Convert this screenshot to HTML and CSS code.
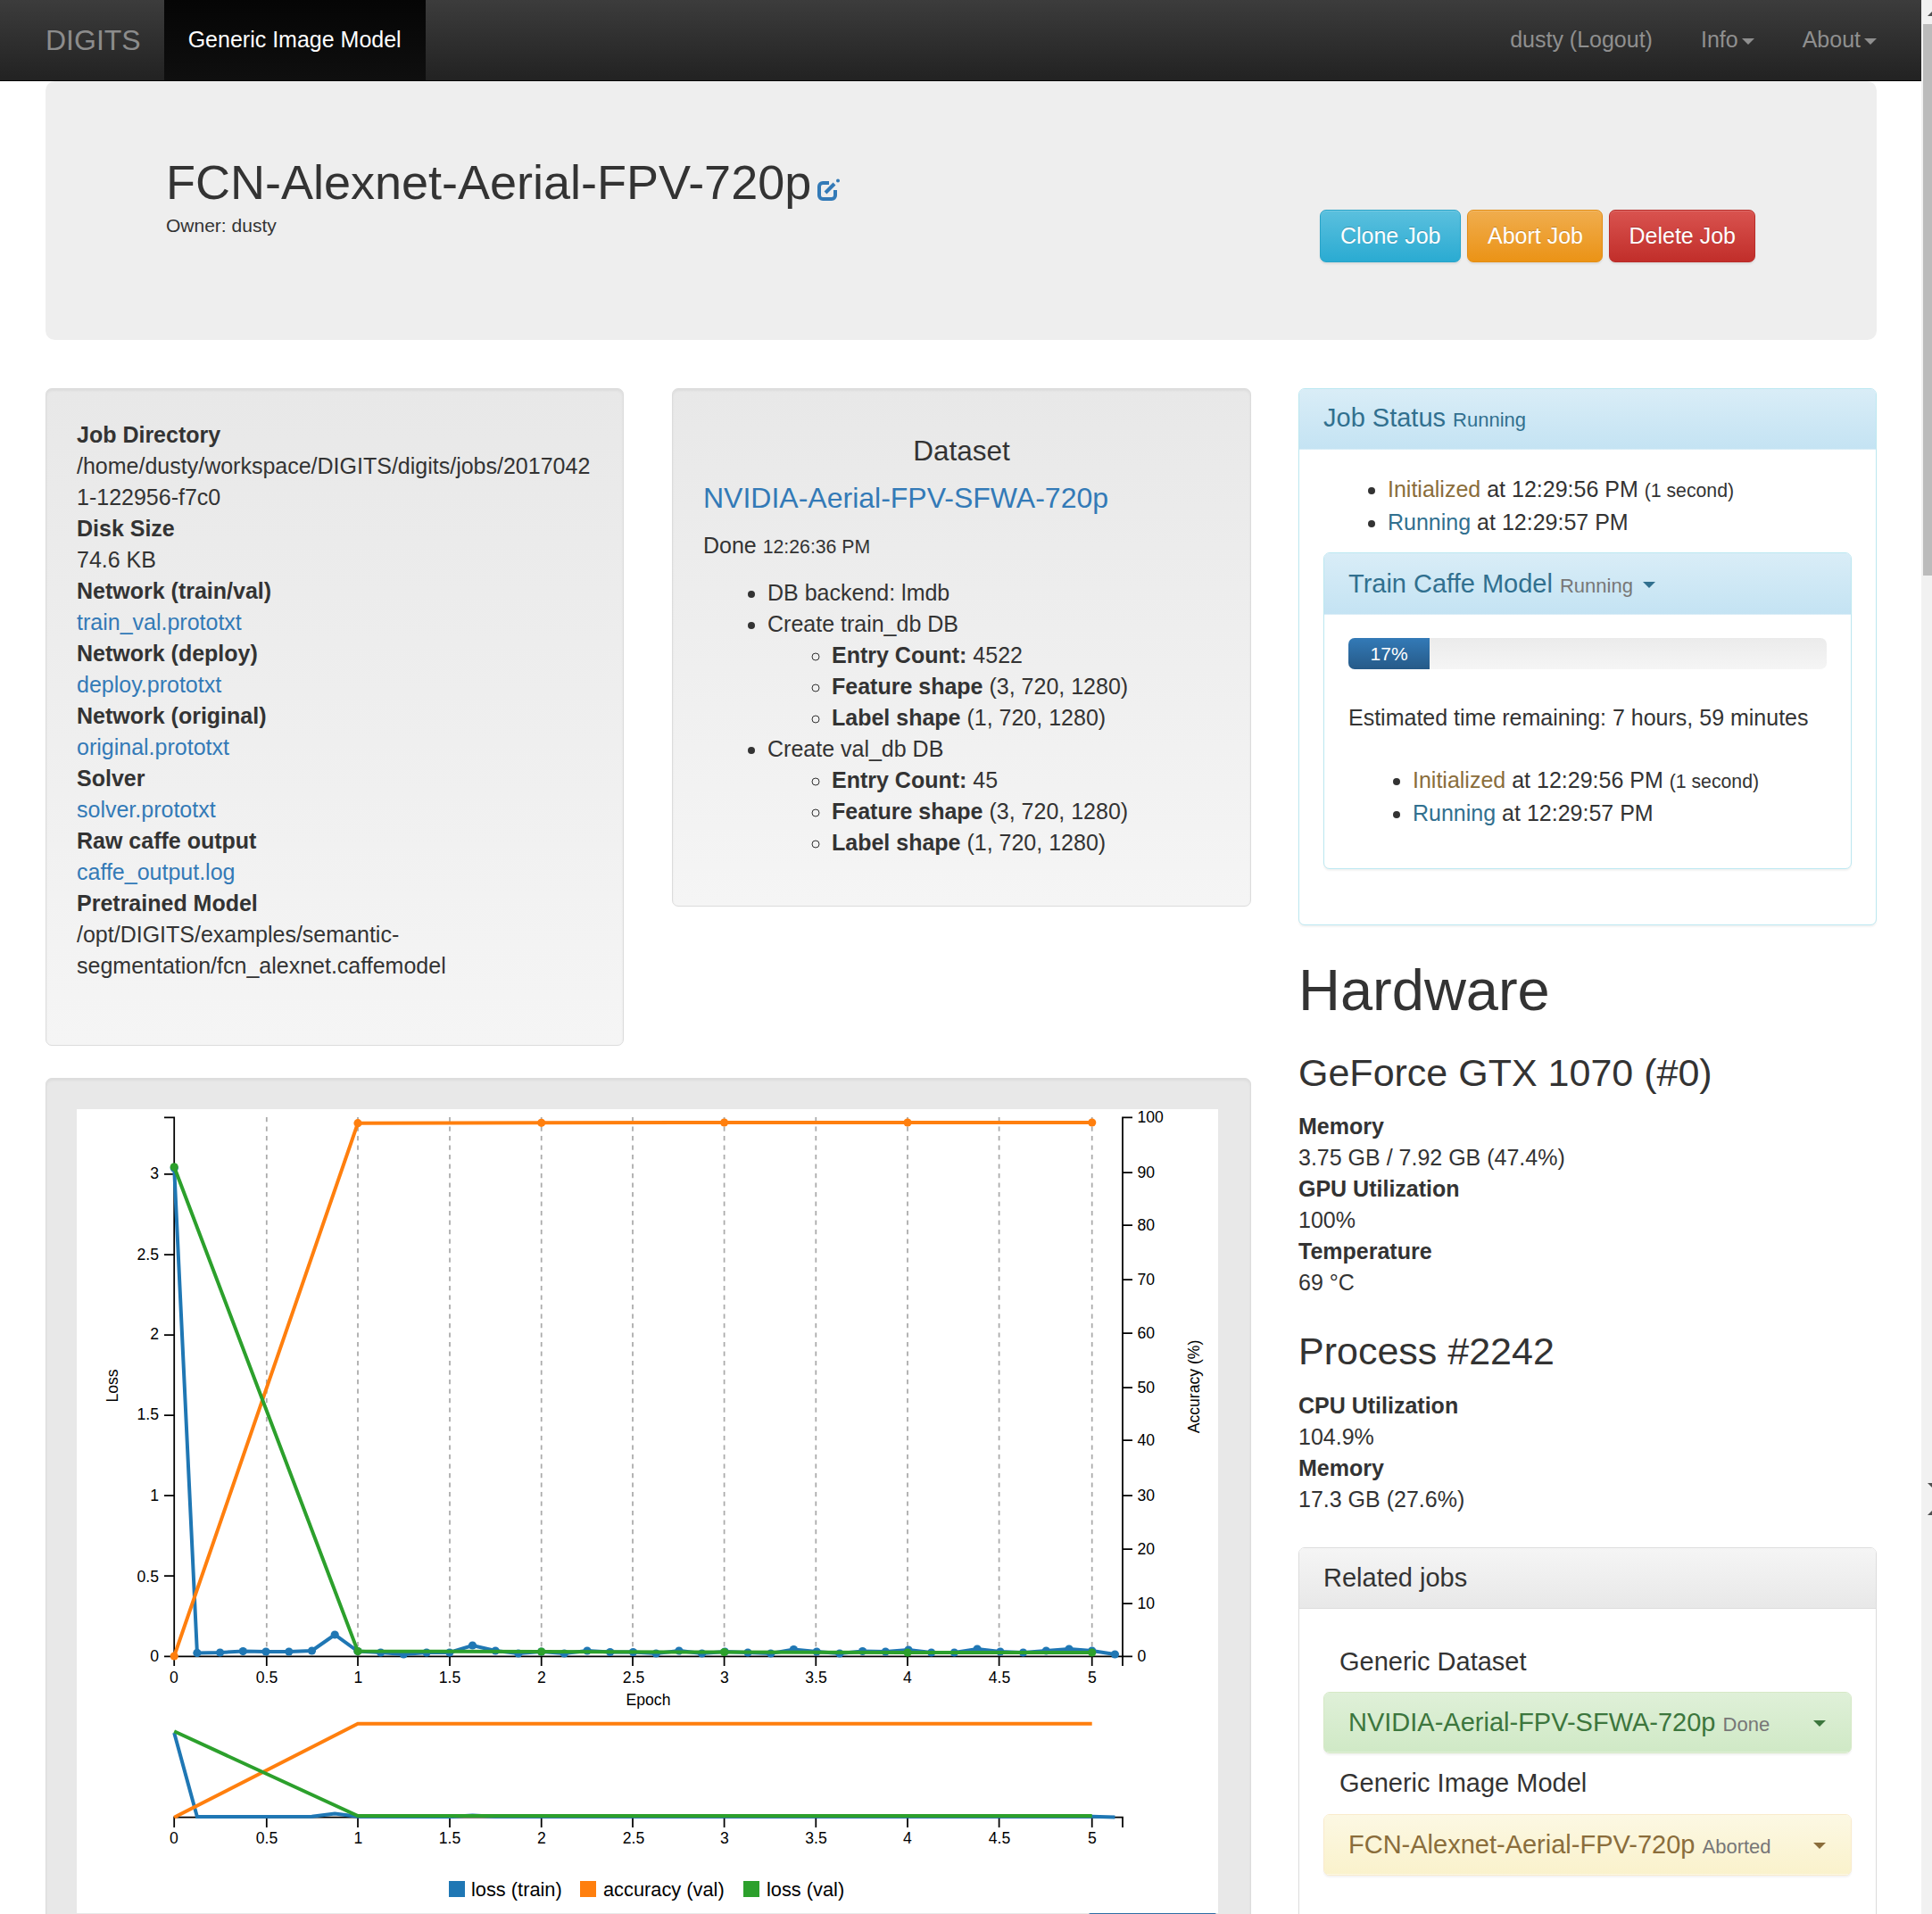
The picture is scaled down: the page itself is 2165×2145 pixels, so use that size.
FILE: index.html
```html
<!DOCTYPE html>
<html lang="en">

<head>
    <meta charset="UTF-8">
    <title>FCN-Alexnet-Aerial-FPV-720p - DIGITS</title>
    <link rel="stylesheet" href="styles.css">
</head>

<body>
    <div class="shell">
        <div class="page">
            <nav class="navbar">
                <a class="brand">DIGITS</a>
                <a class="nav-active">Generic Image Model</a>
                <div class="nav-right">
                    <a class="nav-link">dusty (Logout)</a>
                    <a class="nav-link">Info<span class="caret"></span></a>
                    <a class="nav-link">About<span class="caret"></span></a>
                </div>
            </nav>

            <div class="content">
                <div class="jumbotron">
                    <div class="job-title">
                        <h1>FCN-Alexnet-Aerial-FPV-720p<svg class="edit-icon" viewBox="0 0 25 24">
                                <path d="M13 4H6a4 4 0 0 0-4 4v10a4 4 0 0 0 4 4h10a4 4 0 0 0 4-4v-6" fill="none" stroke="#337ab7" stroke-width="4" />
                                <path d="M9 15 19 5" fill="none" stroke="#337ab7" stroke-width="4" />
                                <circle cx="23" cy="1.6" r="2" fill="#337ab7" />
                            </svg></h1>
                        <div class="owner">Owner: dusty</div>
                    </div>
                    <div class="job-actions">
                        <a class="btn btn-info">Clone Job</a>
                        <a class="btn btn-warning">Abort Job</a>
                        <a class="btn btn-danger">Delete Job</a>
                    </div>
                </div>

                <div class="columns">
                    <div class="col-main">
                        <div class="col-main-top">
                            <div class="well well-info">
                                <dl>
                                    <dt>Job Directory</dt>
                                    <dd>/home/dusty/workspace/DIGITS/digits/jobs/20170421-122956-f7c0</dd>
                                    <dt>Disk Size</dt>
                                    <dd>74.6 KB</dd>
                                    <dt>Network (train/val)</dt>
                                    <dd><a>train_val.prototxt</a></dd>
                                    <dt>Network (deploy)</dt>
                                    <dd><a>deploy.prototxt</a></dd>
                                    <dt>Network (original)</dt>
                                    <dd><a>original.prototxt</a></dd>
                                    <dt>Solver</dt>
                                    <dd><a>solver.prototxt</a></dd>
                                    <dt>Raw caffe output</dt>
                                    <dd><a>caffe_output.log</a></dd>
                                    <dt>Pretrained Model</dt>
                                    <dd>/opt/DIGITS/examples/semantic-segmentation/fcn_alexnet.caffemodel</dd>
                                </dl>
                            </div>
                            <div class="well well-dataset">
                                <h4 class="center">Dataset</h4>
                                <h4><a>NVIDIA-Aerial-FPV-SFWA-720p</a></h4>
                                <p class="done">Done <small>12:26:36 PM</small></p>
                                <ul class="dataset-list">
                                    <li>DB backend: lmdb</li>
                                    <li>Create train_db DB
                                        <ul>
                                            <li><b>Entry Count:</b> 4522</li>
                                            <li><b>Feature shape</b> (3, 720, 1280)</li>
                                            <li><b>Label shape</b> (1, 720, 1280)</li>
                                        </ul>
                                    </li>
                                    <li>Create val_db DB
                                        <ul>
                                            <li><b>Entry Count:</b> 45</li>
                                            <li><b>Feature shape</b> (3, 720, 1280)</li>
                                            <li><b>Label shape</b> (1, 720, 1280)</li>
                                        </ul>
                                    </li>
                                </ul>
                            </div>
                        </div>

                        <div class="well well-chart">
                            <svg class="chart" viewBox="86 1242 1279 901">
                                <!-- grid -->
                                <path class="grid" d="M298.8 1251V1855M401 1251V1855M504 1251V1855M606.7 1251V1855M709 1251V1855M811.6 1251V1855M914.3 1251V1855M1017 1251V1855M1119.6 1251V1855M1223.7 1251V1855" />

                                <!-- main axes -->
                                <path class="axis" d="M184 1251.4H195.2V1855.4H184M184 1314.8H195.2M184 1405H195.2M184 1495H195.2M184 1585H195.2M184 1675H195.2M184 1765H195.2" />
                                <path class="axis" d="M1269 1251.4H1258V1855.4H1269M1258 1313H1269M1258 1372H1269M1258 1433H1269M1258 1493H1269M1258 1554H1269M1258 1613H1269M1258 1675H1269M1258 1735H1269M1258 1796H1269" />
                                <path class="axis" d="M195.2 1866V1855.4H1258V1866M298.8 1855V1866M401 1855V1866M504 1855V1866M606.7 1855V1866M709 1855V1866M811.6 1855V1866M914.3 1855V1866M1017 1855V1866M1119.6 1855V1866M1223.7 1855V1866" />

                                <g class="tick-left">
                                    <text x="178" y="1320">3</text>
                                    <text x="178" y="1411">2.5</text>
                                    <text x="178" y="1500">2</text>
                                    <text x="178" y="1590">1.5</text>
                                    <text x="178" y="1681">1</text>
                                    <text x="178" y="1772">0.5</text>
                                    <text x="178" y="1861">0</text>
                                </g>
                                <g class="tick-right">
                                    <text x="1274.5" y="1257">100</text>
                                    <text x="1274.5" y="1319">90</text>
                                    <text x="1274.5" y="1378">80</text>
                                    <text x="1274.5" y="1439">70</text>
                                    <text x="1274.5" y="1499">60</text>
                                    <text x="1274.5" y="1560">50</text>
                                    <text x="1274.5" y="1619">40</text>
                                    <text x="1274.5" y="1681">30</text>
                                    <text x="1274.5" y="1741">20</text>
                                    <text x="1274.5" y="1802">10</text>
                                    <text x="1274.5" y="1861">0</text>
                                </g>
                                <g class="tick-x">
                                    <text x="195" y="1885">0</text>
                                    <text x="299" y="1885">0.5</text>
                                    <text x="401.5" y="1885">1</text>
                                    <text x="504" y="1885">1.5</text>
                                    <text x="607" y="1885">2</text>
                                    <text x="710" y="1885">2.5</text>
                                    <text x="812" y="1885">3</text>
                                    <text x="914.5" y="1885">3.5</text>
                                    <text x="1017" y="1885">4</text>
                                    <text x="1120" y="1885">4.5</text>
                                    <text x="1224" y="1885">5</text>
                                </g>
                                <text class="tick-x" x="726.5" y="1910">Epoch</text>
                                <text class="tick-x" transform="translate(132 1552) rotate(-90)">Loss</text>
                                <text class="tick-x" transform="translate(1344 1553) rotate(-90)">Accuracy (%)</text>

                                <defs>
                                    <marker id="dot-blue" markerUnits="userSpaceOnUse" markerWidth="12" markerHeight="12" refX="6" refY="6"><circle cx="6" cy="6" r="4.6" fill="#1f77b4" /></marker>
                                    <marker id="dot-orange" markerUnits="userSpaceOnUse" markerWidth="12" markerHeight="12" refX="6" refY="6"><circle cx="6" cy="6" r="4.6" fill="#ff7f0e" /></marker>
                                    <marker id="dot-green" markerUnits="userSpaceOnUse" markerWidth="12" markerHeight="12" refX="6" refY="6"><circle cx="6" cy="6" r="4.6" fill="#2ca02c" /></marker>
                                </defs>

                                <!-- main series -->
                                <polyline class="line line-blue dots-blue" points="195.2,1308 220.9,1851.4 246.6,1851 272.3,1849.6 298,1850 323.8,1850 349.5,1849 375.2,1831 400.9,1849.6 426.6,1851 452.3,1853 478,1851 503.8,1851 529.5,1843 555.2,1849 580.9,1852 606.6,1850 632.3,1852 658,1849 683.7,1850.5 709.5,1850.5 735.2,1852 760.9,1849 786.6,1852 812.3,1850 838,1851 863.7,1852 889.4,1847.5 915.2,1850 940.9,1852 966.6,1849.5 992.3,1850 1018,1848 1043.7,1851 1069.4,1851 1095.1,1847 1120.9,1850 1146.6,1851 1172.3,1849 1198,1847 1223.7,1849 1249.4,1853" />
                                <polyline class="line line-orange dots-orange" points="195.2,1855 401,1257.7 606.7,1257.3 811.6,1257 1017,1257 1223.7,1257" />
                                <polyline class="line line-green dots-green" points="195.2,1306.8 401,1849.6 606.7,1850 811.6,1850.5 1017,1851 1223.7,1851" />

                                <!-- sub chart -->
                                <path class="axis" d="M195.2 2047V2035.7H1258V2047M298.8 2036V2047M401 2036V2047M504 2036V2047M606.7 2036V2047M709 2036V2047M811.6 2036V2047M914.3 2036V2047M1017 2036V2047M1119.6 2036V2047M1223.7 2036V2047" />
                                <polyline class="line line-blue" points="195.2,1941 220.9,2035 349.5,2034.8 375.2,2031.5 400.9,2034.8 503.8,2035 529.5,2033.6 555.2,2034.8 1223.7,2034.8 1249.4,2035.4" />
                                <polyline class="line line-orange" points="195.2,2035.7 401,1930.7 1223.7,1930.7" />
                                <polyline class="line line-green" points="195.2,1939.3 401,2034 1223.7,2034" />

                                <g class="tick-x">
                                    <text x="195" y="2065">0</text>
                                    <text x="299" y="2065">0.5</text>
                                    <text x="401.5" y="2065">1</text>
                                    <text x="504" y="2065">1.5</text>
                                    <text x="607" y="2065">2</text>
                                    <text x="710" y="2065">2.5</text>
                                    <text x="812" y="2065">3</text>
                                    <text x="914.5" y="2065">3.5</text>
                                    <text x="1017" y="2065">4</text>
                                    <text x="1120" y="2065">4.5</text>
                                    <text x="1224" y="2065">5</text>
                                </g>

                                <!-- legend -->
                                <rect x="503" y="2107" width="18" height="18" fill="#1f77b4" />
                                <text class="legend" x="528" y="2124">loss (train)</text>
                                <rect x="650" y="2107" width="18" height="18" fill="#ff7f0e" />
                                <text class="legend" x="676" y="2124">accuracy (val)</text>
                                <rect x="833" y="2107" width="18" height="18" fill="#2ca02c" />
                                <text class="legend" x="859" y="2124">loss (val)</text>
                            </svg>
                            <div class="chart-btn"></div>
                        </div>
                    </div>

                    <div class="col-side">
                        <div class="panel panel-info panel-status">
                            <div class="panel-heading">
                                <h3 class="panel-title">Job Status <small>Running</small></h3>
                            </div>
                            <div class="panel-body">
                                <ul class="status-list">
                                    <li><span class="st-init">Initialized</span> at 12:29:56 PM <small>(1 second)</small></li>
                                    <li><span class="st-run">Running</span> at 12:29:57 PM</li>
                                </ul>
                                <div class="panel panel-info panel-inner">
                                    <div class="panel-heading">
                                        <h4 class="panel-title">Train Caffe Model <small class="muted">Running</small><span class="caret caret-heading"></span></h4>
                                    </div>
                                    <div class="panel-body">
                                        <div class="progress">
                                            <div class="progress-bar" style="width: 17%">17%</div>
                                        </div>
                                        <p class="eta">Estimated time remaining: 7 hours, 59 minutes</p>
                                        <ul class="status-list">
                                            <li><span class="st-init">Initialized</span> at 12:29:56 PM <small>(1 second)</small></li>
                                            <li><span class="st-run">Running</span> at 12:29:57 PM</li>
                                        </ul>
                                    </div>
                                </div>
                            </div>
                        </div>

                        <h1 class="hw-title">Hardware</h1>
                        <h3>GeForce GTX 1070 (#0)</h3>
                        <dl>
                            <dt>Memory</dt>
                            <dd>3.75 GB / 7.92 GB (47.4%)</dd>
                            <dt>GPU Utilization</dt>
                            <dd>100%</dd>
                            <dt>Temperature</dt>
                            <dd>69 °C</dd>
                        </dl>
                        <h3>Process #2242</h3>
                        <dl>
                            <dt>CPU Utilization</dt>
                            <dd>104.9%</dd>
                            <dt>Memory</dt>
                            <dd>17.3 GB (27.6%)</dd>
                        </dl>

                        <div class="panel panel-default panel-related">
                            <div class="panel-heading">
                                <h3 class="panel-title">Related jobs</h3>
                            </div>
                            <div class="panel-body">
                                <div class="related-label">Generic Dataset</div>
                                <div class="panel panel-success panel-job">
                                    <div class="panel-heading job-row">
                                        <span class="panel-title">NVIDIA-Aerial-FPV-SFWA-720p <small class="muted">Done</small></span>
                                        <span class="caret caret-heading"></span>
                                    </div>
                                </div>
                                <div class="related-label">Generic Image Model</div>
                                <div class="panel panel-warning panel-job">
                                    <div class="panel-heading job-row">
                                        <span class="panel-title">FCN-Alexnet-Aerial-FPV-720p <small class="muted">Aborted</small></span>
                                        <span class="caret caret-heading"></span>
                                    </div>
                                </div>
                            </div>
                        </div>
                    </div>
                </div>
            </div>
        </div>

        <div class="scrollbar">
            <div class="scroll-arrow arrow-up arrow-top"></div>
            <div class="scroll-thumb"></div>
            <div class="scroll-arrow arrow-down arrow-mid-down"></div>
            <div class="scroll-arrow arrow-up arrow-mid-up"></div>
        </div>
    </div>
</body>

</html>
```

FILE: styles.css
```css
* {
    box-sizing: border-box;
}

body {
    margin: 0;
    background: #fff;
    color: #333;
    font-family: "Liberation Sans", Arial, sans-serif;
    font-size: 25px;
    line-height: 35px;
}

a {
    color: #337ab7;
    text-decoration: none;
}

small {
    font-size: 85%;
}

.shell {
    display: flex;
    height: 2145px;
    overflow: hidden;
}

.page {
    width: 2153px;
    flex: none;
}

/* navbar */
.navbar {
    display: flex;
    align-items: stretch;
    height: 91px;
    padding: 0 26px 0 51px;
    background: linear-gradient(to bottom, #3c3c3c 0%, #222 100%);
    border-bottom: 1px solid #080808;
}

.brand {
    color: #8c8c8c;
    font-size: 32px;
    line-height: 90px;
    margin-right: 26px;
}

.nav-active {
    color: #fff;
    line-height: 89px;
    padding: 0 27px;
    background: linear-gradient(to bottom, #050505 0%, #0f0f0f 100%);
}

.nav-right {
    display: flex;
    margin-left: auto;
    gap: 54px;
    padding-right: 24px;
}

.nav-link {
    color: #8f8f8f;
    line-height: 89px;
}

.caret {
    display: inline-block;
    width: 0;
    height: 0;
    margin-left: 4px;
    vertical-align: middle;
    border-top: 7px solid #8f8f8f;
    border-left: 7px solid transparent;
    border-right: 7px solid transparent;
}

/* page header */
.content {
    padding: 0 50px 0 51px;
}

.jumbotron {
    display: flex;
    justify-content: space-between;
    height: 290px;
    padding: 0 136px 0 135px;
    background: #eee;
    border-radius: 10.5px;
}

.job-title h1 {
    margin: 78px 0 0;
    font-size: 54px;
    font-weight: 400;
    line-height: 70px;
}

.edit-icon {
    width: 25px;
    height: 24px;
    margin-left: 7px;
    vertical-align: -2px;
    overflow: visible;
}

.owner {
    font-size: 21px;
    line-height: 35px;
    margin-top: -4px;
}

.job-actions {
    display: flex;
    gap: 7px;
    margin-top: 144px;
    height: 59px;
}

.btn {
    display: block;
    height: 59px;
    line-height: 57px;
    padding: 0 22px;
    color: #fff;
    border: 1px solid transparent;
    border-radius: 7px;
    text-shadow: 0 -1px 0 rgba(0, 0, 0, 0.2);
    box-shadow: inset 0 1px 0 rgba(255, 255, 255, 0.15), 0 2px 2px rgba(0, 0, 0, 0.075);
}

.btn-info {
    background: linear-gradient(to bottom, #5bc0de 0%, #2aabd2 100%);
    border-color: #28a4c9;
}

.btn-warning {
    padding: 0 21.5px;
    background: linear-gradient(to bottom, #f0ad4e 0%, #eb9316 100%);
    border-color: #e38d13;
}

.btn-danger {
    padding: 0 21px;
    background: linear-gradient(to bottom, #d9534f 0%, #c12e2a 100%);
    border-color: #b92c28;
}

/* columns */
.columns {
    display: flex;
    gap: 53px;
    margin-top: 54px;
    align-items: flex-start;
}

.col-main {
    width: 1351px;
    flex: none;
}

.col-main-top {
    display: grid;
    grid-template-columns: 648px 649px;
    gap: 54px;
    align-items: start;
}

.col-side {
    width: 648px;
    flex: none;
}

.well {
    padding: 34px;
    background: linear-gradient(to bottom, #e8e8e8 0%, #f5f5f5 100%);
    border: 1px solid #dcdcdc;
    border-radius: 7px;
    box-shadow: inset 0 2px 3px rgba(0, 0, 0, 0.05), 0 2px 0 rgba(255, 255, 255, 0.1);
}

dl {
    margin: 0 0 35px;
}

dt {
    font-weight: 700;
}

dd {
    margin: 0;
}

.well-info {
    height: 737px;
}

.well-info dd {
    overflow-wrap: anywhere;
}

.well-info dd:last-child {
    overflow-wrap: normal;
}

.well-dataset {
    height: 581px;
}

h4 {
    font-size: 32px;
    font-weight: 400;
    line-height: 34.6px;
    margin: 17.5px 0;
}

.well-dataset h4 {
    margin: 16.5px 0 18.5px;
}

.well-dataset h4.center {
    margin-top: 18px;
    font-size: 31.5px;
}

.center {
    text-align: center;
}

.done {
    margin: 0 0 15.5px;
}

ul {
    margin: 0;
    padding-left: 72px;
}

.dataset-list {
    margin-bottom: 17.5px;
}

/* chart */
.well-chart {
    margin-top: 36px;
    background: #e8e8e8;
    height: 1000px;
}

.chart {
    display: block;
    width: 1279px;
    height: 901px;
    background: #fff;
}

.chart-btn {
    width: 143px;
    height: 40px;
    margin-left: 1134px;
    background: #2e6da4;
    border-radius: 2px 2px 0 0;
}

.chart text {
    font-family: "Liberation Sans", Arial, sans-serif;
    font-size: 17.6px;
    fill: #000;
}

.tick-left text {
    text-anchor: end;
}

.tick-x,
.tick-x text {
    text-anchor: middle;
}

.chart .legend {
    font-size: 21.8px;
}

.grid {
    fill: none;
    stroke: #aaa;
    stroke-width: 1.75;
    stroke-dasharray: 5.25 5.25;
}

.axis {
    fill: none;
    stroke: #000;
    stroke-width: 1.75;
}

.line {
    fill: none;
    stroke-width: 4;
}

.line-blue {
    stroke: #1f77b4;
}

.line-orange {
    stroke: #ff7f0e;
}

.line-green {
    stroke: #2ca02c;
}

.dots-blue {
    marker: url(#dot-blue);
}

.dots-orange {
    marker: url(#dot-orange);
}

.dots-green {
    marker: url(#dot-green);
}

/* panels */
.panel {
    background: #fff;
    border: 1px solid transparent;
    border-radius: 7px;
    box-shadow: 0 2px 2px rgba(0, 0, 0, 0.05);
}

.panel-heading {
    padding: 17.5px 27px;
    border-bottom: 1px solid transparent;
    border-radius: 5px 5px 0 0;
}

.panel-title {
    margin: 0;
    font-size: 29px;
    font-weight: 400;
    line-height: 31px;
}

.panel-body {
    padding: 27px 27px 27px;
}

.panel-info {
    border-color: #bce8f1;
}

.panel-info > .panel-heading {
    color: #31708f;
    background: linear-gradient(to bottom, #d9edf7 0%, #c4e3f3 100%);
}

.panel-title small {
    font-size: 22px;
}

.muted {
    color: #777;
}

.panel-status {
    margin-bottom: 38px;
}

.panel-status > .panel-heading {
    height: 68px;
    padding-top: 17px;
}

.status-list {
    margin-bottom: 16px;
}

.st-init {
    color: #8a6d3b;
}

.st-run {
    color: #31708f;
}

.panel-inner {
    margin-bottom: 35px;
}

.panel-inner .panel-body {
    padding: 26px 27px 26px;
}

.panel-inner .status-list {
    margin-bottom: 18px;
}

.panel-inner .panel-title {
    line-height: 34.6px;
}

.panel-inner > .panel-heading {
    height: 69px;
    padding-top: 16.5px;
}

.caret-heading {
    border-top-color: currentColor;
    margin-left: 11px;
}

.progress {
    height: 35px;
    margin-bottom: 36.5px;
    background: linear-gradient(to bottom, #ebebeb 0%, #f5f5f5 100%);
    border-radius: 7px;
    overflow: hidden;
}

.progress-bar {
    height: 35px;
    color: #fff;
    font-size: 21px;
    line-height: 35px;
    text-align: center;
    background: linear-gradient(to bottom, #337ab7 0%, #265a88 100%);
}

.eta {
    margin: 0 0 35px;
}

.hw-title {
    margin: 0 0 18.5px;
    font-size: 65px;
    font-weight: 400;
    line-height: 69px;
}

.col-side h3 {
    margin: 35px 0 20.5px;
    font-size: 43px;
    font-weight: 400;
    line-height: 46px;
}

.col-side dl {
    margin-bottom: 36px;
}

.col-side h3 + dl ~ h3 {
    margin-bottom: 20.5px;
}

.col-side h3.panel-title {
    margin: 0;
    font-size: 29px;
    line-height: 31px;
}

.panel-default {
    border-color: #ddd;
}

.panel-default > .panel-heading {
    height: 68px;
    padding-top: 18px;
    background: linear-gradient(to bottom, #f5f5f5 0%, #e8e8e8 100%);
    border-bottom-color: #ddd;
}

.panel-related {
    margin-top: 36px;
    height: 600px;
}

.panel-related > .panel-body {
    padding: 26px 27px;
}

.related-label {
    font-size: 29px;
    line-height: 32px;
    margin: 17px 0 18.5px 18px;
}

.panel-job {
    margin: 0;
}

.panel-success {
    border-color: #d6e9c6;
}

.panel-warning {
    border-color: #faebcc;
}

.panel-success .panel-heading {
    color: #3c763d;
    background: linear-gradient(to bottom, #dff0d8 0%, #d0e9c6 100%);
}

.panel-warning .panel-heading {
    color: #8a6d3b;
    background: linear-gradient(to bottom, #fcf8e3 0%, #faf2cc 100%);
}

.job-row {
    display: flex;
    align-items: center;
    justify-content: space-between;
    height: 67px;
    padding: 3px 28px 0 27px;
    border-radius: 5px;
}

.job-row .caret-heading {
    margin-right: 0;
}

/* browser scrollbar */
.scrollbar {
    position: relative;
    width: 12px;
    flex: none;
    background: #f1f1f1;
}

.scroll-thumb {
    width: 10px;
    height: 618px;
    margin: 27px 0 0 2px;
    background: #bbb;
}

.scroll-arrow {
    position: absolute;
    left: 7px;
    width: 0;
    height: 0;
    border-left: 5px solid transparent;
    border-right: 5px solid transparent;
}

.arrow-up {
    border-bottom: 5px solid #505050;
}

.arrow-down {
    border-top: 5px solid #505050;
}

.arrow-top {
    top: 13px;
}

.arrow-mid-down {
    top: 1662px;
}

.arrow-mid-up {
    top: 1693px;
}
```
